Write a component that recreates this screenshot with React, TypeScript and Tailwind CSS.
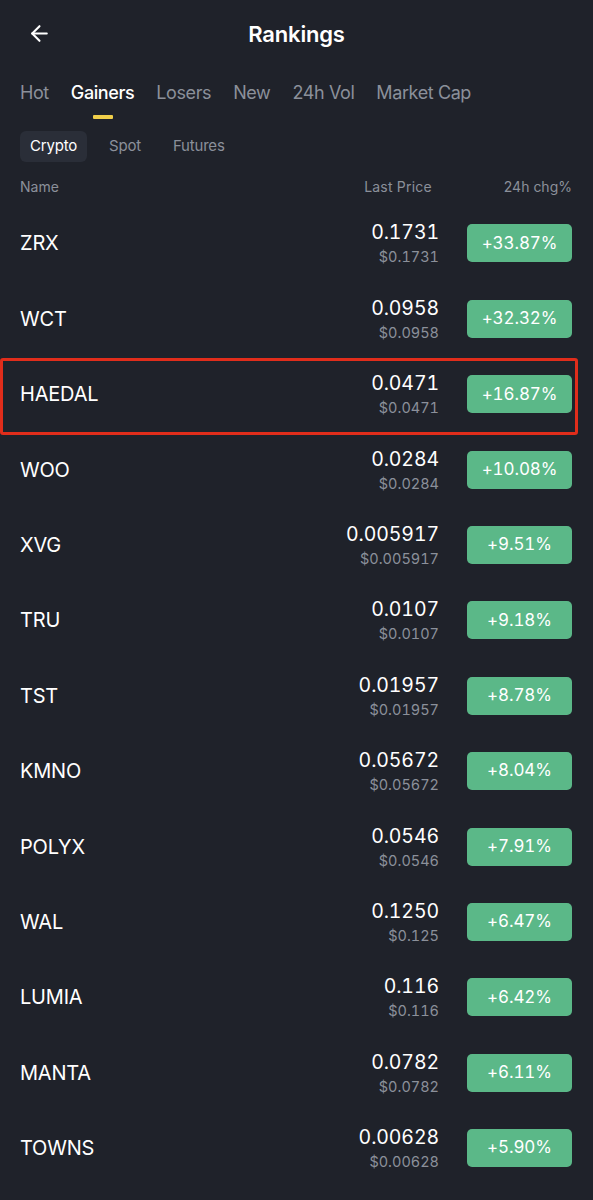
import { ArrowLeft } from 'lucide-react';

type Coin = {
  name: string;
  price: string;
  usd: string;
  change: string;
};

const coins: Coin[] = [
  { name: 'ZRX', price: '0.1731', usd: '$0.1731', change: '+33.87%' },
  { name: 'WCT', price: '0.0958', usd: '$0.0958', change: '+32.32%' },
  { name: 'HAEDAL', price: '0.0471', usd: '$0.0471', change: '+16.87%' },
  { name: 'WOO', price: '0.0284', usd: '$0.0284', change: '+10.08%' },
  { name: 'XVG', price: '0.005917', usd: '$0.005917', change: '+9.51%' },
  { name: 'TRU', price: '0.0107', usd: '$0.0107', change: '+9.18%' },
  { name: 'TST', price: '0.01957', usd: '$0.01957', change: '+8.78%' },
  { name: 'KMNO', price: '0.05672', usd: '$0.05672', change: '+8.04%' },
  { name: 'POLYX', price: '0.0546', usd: '$0.0546', change: '+7.91%' },
  { name: 'WAL', price: '0.1250', usd: '$0.125', change: '+6.47%' },
  { name: 'LUMIA', price: '0.116', usd: '$0.116', change: '+6.42%' },
  { name: 'MANTA', price: '0.0782', usd: '$0.0782', change: '+6.11%' },
  { name: 'TOWNS', price: '0.00628', usd: '$0.00628', change: '+5.90%' },
];

const tabs = ['Hot', 'Gainers', 'Losers', 'New', '24h Vol', 'Market Cap'];

export default function App() {
  return (
    <div className="w-[593px] h-[1200px] overflow-hidden bg-[#1f222a] text-white font-['Inter','Liberation_Sans',sans-serif]">
      {/* header */}
      <div className="relative h-[68px] flex items-center justify-center">
        <ArrowLeft className="absolute left-[27px] top-[21px] w-[25px] h-[25px]" strokeWidth={2} />
        <h1 className="text-[22px] font-semibold tracking-[-0.2px]">Rankings</h1>
      </div>

      {/* tabs */}
      <div className="flex gap-[22px] px-[20px] pt-[13px] h-[63px]">
        {tabs.map((t) => (
          <div key={t} className="flex flex-col items-center">
            <span
              className={
                t === 'Gainers'
                  ? 'text-[18px] leading-[24px] font-medium text-white tracking-[-0.4px]'
                  : 'text-[18px] leading-[24px] text-[#8b909a] tracking-[-0.4px]'
              }
            >
              {t}
            </span>
            {t === 'Gainers' && <div className="mt-[10px] w-[20px] h-[4px] rounded-[1px] bg-[#f0cf4a]" />}
          </div>
        ))}
      </div>

      {/* sub tabs */}
      <div className="flex gap-[12px] px-[20px] h-[31px]">
        <div className="h-[31px] px-[10px] rounded-[6px] bg-[#2a2e38] flex items-center text-[15px] tracking-[-0.2px]">
          Crypto
        </div>
        <div className="h-[31px] px-[10px] flex items-center text-[15px] text-[#8b909a] tracking-[-0.2px]">
          Spot
        </div>
        <div className="h-[31px] px-[10px] flex items-center text-[15px] text-[#8b909a] tracking-[-0.2px]">
          Futures
        </div>
      </div>

      {/* column header */}
      <div className="flex items-start h-[43.8px] pt-[16px] px-[20px] pr-[21px] text-[14px] leading-[18px] text-[#8b909a]">
        <span className="flex-1">Name</span>
        <span className="mr-[72px] tracking-[0.2px]">Last Price</span>
        <span>24h chg%</span>
      </div>

      {/* rows */}
      <div>
        {coins.map((c) => (
          <div key={c.name} className="relative h-[75.4px] flex items-center px-[20px] pr-[21px]">
            {c.name === 'HAEDAL' && (
              <div className="absolute left-0 right-[15px] top-[1.5px] bottom-[-3px] border-[3px] border-[#e02d1b] rounded-[3px]" />
            )}
            <span className="flex-1 text-[20px] tracking-[-0.2px]">{c.name}</span>
            <div className="flex flex-col items-end tabular-nums">
              <span className="text-[19.5px] leading-[24px] tracking-[-0.1px]">{c.price}</span>
              <span className="mt-[4px] text-[14.5px] leading-[18px] text-[#8b909a]">{c.usd}</span>
            </div>
            <div className="ml-[28px] w-[105px] h-[38px] rounded-[5px] bg-[#5bb888] flex items-center justify-center text-[17px] tabular-nums tracking-[-0.1px]">
              {c.change}
            </div>
          </div>
        ))}
      </div>
    </div>
  );
}
